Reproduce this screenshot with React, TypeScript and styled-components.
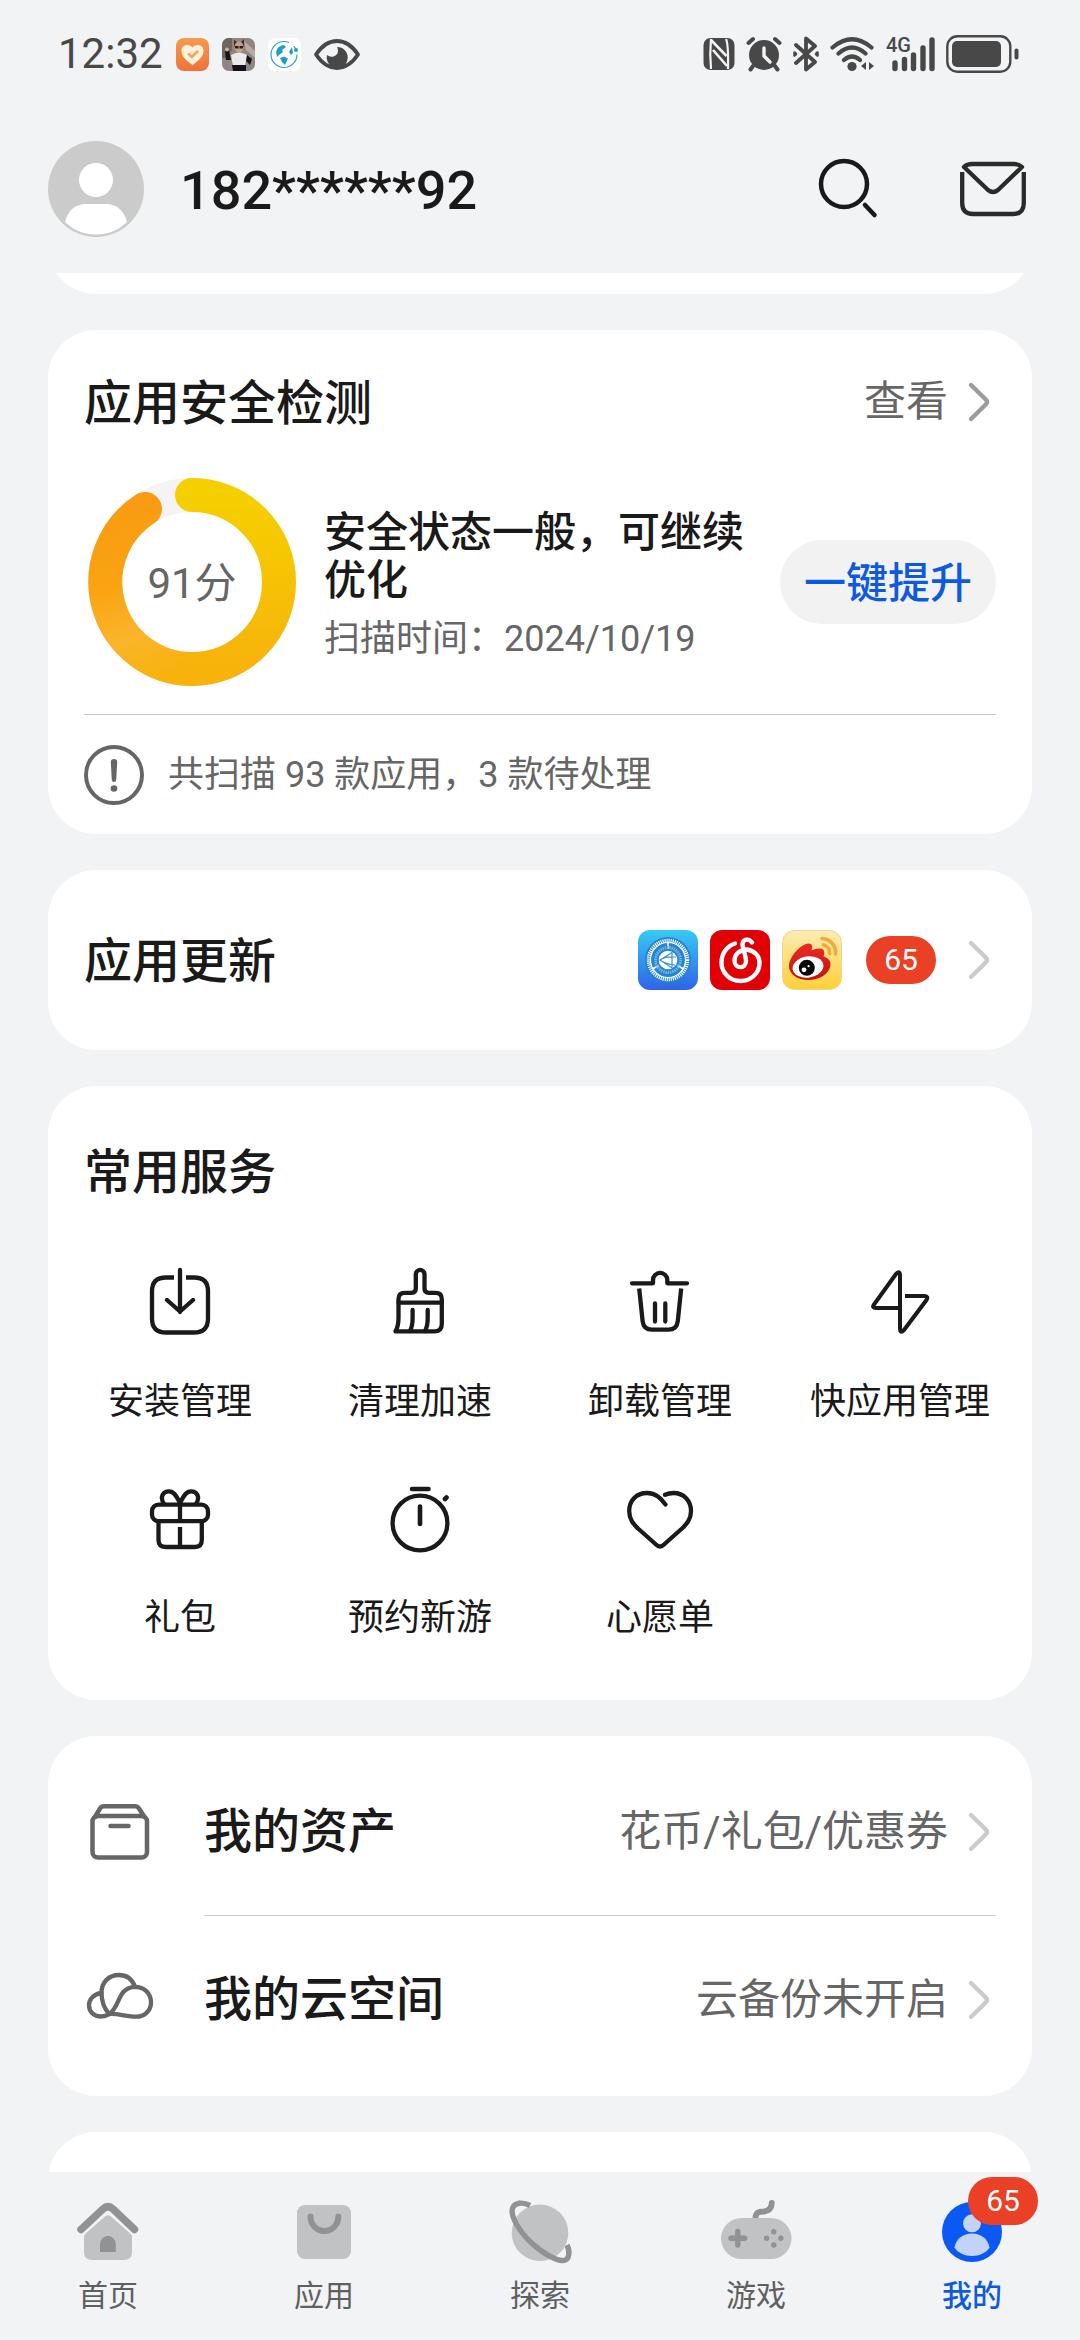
import React from "react";
import styled, { createGlobalStyle, css } from "styled-components";

const ink = "#1a1a1a";
const muted = "#666666";
const accent = "#0d5ae0";
const page = "#f1f3f5";

const GlobalStyle = createGlobalStyle`
  *, *::before, *::after { box-sizing: border-box; }
  body {
    margin: 0;
    background: ${page};
    color: ${ink};
    font-family: Roboto, "Noto Sans CJK SC", sans-serif;
    font-size: 36px;
    line-height: 48px;
  }
  button {
    margin: 0;
    padding: 0;
    border: 0;
    background: none;
    color: inherit;
    font: inherit;
    cursor: pointer;
  }
  a { color: inherit; text-decoration: none; }
  h1, h2, p, ul { margin: 0; padding: 0; font: inherit; }
  ul { list-style: none; }
  svg { display: block; flex: none; }
`;

/* ---------- layout ---------- */

const Screen = styled.div`
  display: flex;
  flex-direction: column;
  height: 100vh;
`;

const StatusBar = styled.div`
  display: flex;
  align-items: center;
  justify-content: space-between;
  height: 108px;
  flex: none;
  padding: 0 60px 0 58px;
  color: #484848;
`;

const StatusGroup = styled.div<{ $gap: number }>`
  display: flex;
  align-items: center;
  gap: ${(p) => p.$gap}px;
`;

const Clock = styled.time`
  font-size: 42px;
`;

const AccountBar = styled.header`
  display: flex;
  align-items: center;
  gap: 36px;
  flex: none;
  height: 165px;
  padding: 0 48px 3px;
`;

const Phone = styled.h1`
  flex: 1;
  padding-top: 3px;
  font-size: 54px;
  font-weight: 500;
  line-height: 72px;
`;

const Actions = styled.div`
  display: flex;
  gap: 72px;
`;

const Feed = styled.main`
  display: flex;
  flex: 1;
  flex-direction: column;
  gap: 36px;
  min-height: 0;
  padding: 0 48px;
  overflow: hidden auto;
  scrollbar-width: none;
`;

const Card = styled.section<{ $pad: string }>`
  flex: none;
  padding: ${(p) => p.$pad};
  border-radius: 48px;
  background: #fff;
`;

const ScrolledCard = styled(Card)`
  height: 96px;
  margin-top: -75px;
`;

const PeekCard = styled(Card)`
  height: 168px;
`;

const Row = styled.div<{ $height: number }>`
  display: flex;
  align-items: center;
  justify-content: space-between;
  height: ${(p) => p.$height}px;
`;

const Title = styled.h2`
  padding-top: 3px;
  font-size: 48px;
  font-weight: 500;
  line-height: 72px;
`;

const detailText = css`
  color: ${muted};
  font-size: 42px;
  line-height: 48px;
`;

const DetailLink = styled.a`
  display: flex;
  align-items: center;
  gap: 12px;
  ${detailText}
`;

/* ---------- security card ---------- */

const ScanBody = styled.div`
  display: flex;
  align-items: center;
  gap: 24px;
  margin-bottom: 24px;
`;

const Gauge = styled.div`
  display: grid;
  flex: none;
  place-items: center;
  > * { grid-area: 1 / 1; }
`;

const Score = styled.span`
  padding-top: 3px;
  ${detailText}
`;

const ScanText = styled.div`
  flex: 1;
  padding-top: 8px;
`;

const ScanState = styled.p`
  font-size: 42px;
  font-weight: 500;
  line-height: 48px;
`;

const Note = styled.p`
  color: ${muted};
`;

const ScanDate = styled(Note)`
  margin-top: 10px;
`;

const BoostButton = styled.button`
  flex: none;
  height: 84px;
  padding: 3px 24px 0;
  border-radius: 42px;
  background: #f2f2f2;
  color: ${accent};
  font-size: 42px;
  font-weight: 500;
`;

const ScanFooter = styled.div`
  display: flex;
  align-items: center;
  gap: 24px;
  height: 120px;
  border-top: 1px solid #cccccc;
`;

/* ---------- updates card ---------- */

const UpdateLink = styled.a`
  display: flex;
  align-items: center;
  gap: 24px;
`;

const AppIcons = styled.span`
  display: flex;
  gap: 12px;
`;

const Badge = styled.span`
  display: flex;
  align-items: center;
  justify-content: center;
  width: 70px;
  height: 48px;
  border-radius: 24px;
  background: #e94026;
  color: #fff;
  font-size: 30px;
`;

/* ---------- services card ---------- */

const ServiceTitle = styled(Title)`
  padding: 3px 24px 0;
`;

const ServiceGrid = styled.ul`
  display: grid;
  grid-template-columns: repeat(4, 1fr);
  row-gap: 56px;
  margin-top: 57px;
`;

const Service = styled.button`
  display: flex;
  flex-direction: column;
  align-items: center;
  gap: 40px;
  width: 100%;
`;

/* ---------- links card ---------- */

const MenuLink = styled.a`
  display: flex;
  align-items: center;
  gap: 48px;
`;

const MenuLine = styled.span<{ $ruled: boolean }>`
  display: flex;
  flex: 1;
  align-items: center;
  gap: 12px;
  height: 168px;
  border-bottom: 1px solid ${(p) => (p.$ruled ? "#cccccc" : "transparent")};
`;

const MenuName = styled.span`
  flex: 1;
  font-size: 48px;
  font-weight: 500;
`;

const MenuDetail = styled.span`
  ${detailText}
`;

/* ---------- bottom tabs ---------- */

const TabBar = styled.nav`
  display: grid;
  grid-template-columns: repeat(5, 1fr);
  flex: none;
  height: 168px;
  background: ${page};
`;

const Tab = styled.a<{ $active: boolean }>`
  display: flex;
  flex-direction: column;
  align-items: center;
  gap: 10px;
  padding-top: 24px;
  color: ${(p) => (p.$active ? accent : "#5e5f60")};
  font-size: 30px;
  font-weight: ${(p) => (p.$active ? 500 : 400)};
  line-height: 36px;
`;

const TabIcon = styled.span`
  position: relative;
`;

const TabBadge = styled(Badge)`
  position: absolute;
  top: -19px;
  left: 32px;
  font-weight: 400;
`;

/* ---------- drawings ---------- */

const Line72 = ({ children, color = ink, width = 4.3 }: { children: React.ReactNode; color?: string; width?: number }) => (
  <svg
    width="72"
    height="72"
    viewBox="0 0 72 72"
    fill="none"
    stroke={color}
    strokeWidth={width}
    strokeLinecap="round"
    strokeLinejoin="round"
    aria-hidden="true"
  >
    {children}
  </svg>
);

const Chevron = ({ color = "#cccccc" }: { color?: string }) => (
  <svg width="36" height="48" viewBox="0 0 36 48" fill="none" stroke={color} strokeWidth="4.4" strokeLinecap="round" strokeLinejoin="round" aria-hidden="true">
    <path d="M11 7L26 21.8Q28 24 26 26.2L11 41" />
  </svg>
);

const Avatar = () => (
  <svg width="96" height="96" viewBox="0 0 96 96" role="img" aria-label="头像">
    <circle cx="48" cy="48" r="48" fill="#cbcbcb" />
    <circle cx="48" cy="39" r="17" fill="#fff" />
    <path d="M17 81C20 69 28 63 38 63H58C68 63 76 69 79 81C71 89 60 93.5 48 93.5S25 89 17 81Z" fill="#fff" />
  </svg>
);

const SearchIcon = () => (
  <Line72 width={4.5}>
    <circle cx="28" cy="31" r="23" />
    <path d="M49 52L58.5 62" />
  </Line72>
);

const MailIcon = () => (
  <Line72 color="#2a2b2b" width={4.3}>
    <path d="M4 14Q7 11 12 11H54Q59 11 62 14L38 37Q33 41 28 37Z" />
    <path d="M2.2 19V50Q2.2 61 13 61H53Q63.8 61 63.8 50V19" strokeLinecap="butt" />
  </Line72>
);

const HeartAppIcon = () => (
  <svg width="33" height="33" viewBox="0 0 33 33" aria-hidden="true">
    <defs>
      <linearGradient id="heartBg" x1="0" y1="0" x2="0" y2="1">
        <stop offset="0" stopColor="#f59a50" />
        <stop offset="1" stopColor="#ee7339" />
      </linearGradient>
    </defs>
    <rect width="33" height="33" rx="8" fill="url(#heartBg)" />
    <path d="M16.5 27C10 22.500 5.500 18 5.500 13C5.500 9 8.300 7 11 7C13.500 7 15.500 8 16.500 9.500C17.500 8 19.500 7 22 7C24.700 7 27.500 9 27.500 13C27.500 18 23 22.500 16.500 27Z" fill="#fff0da" />
    <path d="M12 15.500L15.800 19L22 13" fill="none" stroke="#f2a367" strokeWidth="2.600" />
  </svg>
);

const PhotoIcon = () => (
  <svg width="33" height="33" viewBox="0 0 33 33" aria-hidden="true">
    <defs>
      <clipPath id="photoClip"><rect width="33" height="33" rx="7" /></clipPath>
    </defs>
    <g clipPath="url(#photoClip)">
      <rect width="33" height="33" fill="#8f8680" />
      <path d="M0 0H10V12L4 20H0Z" fill="#6d6561" />
      <path d="M22 3L33 13V20L24 12Z" fill="#b5aca6" />
      <path d="M12 2L15 4H19L22 1L22 8H12Z" fill="#3b2b28" />
      <ellipse cx="17" cy="9" rx="4.500" ry="5.500" fill="#c99d8b" />
      <path d="M12.500 8H16.500V10.500H13.500ZM17.500 8H21.500L20.500 10.500H17.500Z" fill="#201a1a" />
      <path d="M9 17Q17 12 25 17L23 28H11Z" fill="#ece9ec" />
      <path d="M3 13L7 12L9 22H4ZM25 17L30 21L28 27L24 23Z" fill="#171519" />
      <circle cx="5" cy="11.500" r="2" fill="#d6ab99" />
      <path d="M10 27H24V33H11Z" fill="#121014" />
    </g>
  </svg>
);

const GlobeIcon = () => (
  <svg width="33" height="33" viewBox="0 0 33 33" aria-hidden="true">
    <rect width="33" height="33" rx="7" fill="#fff" />
    <circle cx="16" cy="16.500" r="13" fill="none" stroke="#2fa3c4" strokeWidth="1.200" strokeDasharray="66 6 6 4" />
    <path d="M8 14Q9 8 16 7L18 9L14 12L15 14L11 17L9 19Z" fill="#1f9fc6" />
    <path d="M12 20L16 18.500L20 20.500L17 27L14 24Z" fill="#1f9fc6" />
    <path d="M21 14L24 9L25 15L23 17Z" fill="#1f9fc6" />
    <circle cx="28" cy="12" r="2" fill="#1f9fc6" />
  </svg>
);

const EyeIcon = () => (
  <svg width="46" height="33" viewBox="0 0 46 33" aria-hidden="true">
    <path d="M2 16.500Q11 3 23 3T44 16.500Q35 30 23 30T2 16.500Z" fill="none" stroke="#484848" strokeWidth="3.800" strokeLinejoin="round" />
    <path d="M23 9A10.500 10.500 0 1 1 13 17Q16 19.500 19.500 18.500Q24 17 24 12.500Q24 10.500 23 9Z" fill="#484848" />
  </svg>
);

const NfcIcon = () => (
  <svg width="32" height="36" viewBox="0 0 32 36" aria-hidden="true">
    <rect x="0.500" y="2" width="31" height="32" rx="7" fill="#484848" />
    <g fill="none" stroke={page} strokeWidth="2.200">
      <path d="M8 3Q6.500 18 8 33" />
      <path d="M23 3Q25.500 8 25 33" />
      <path d="M8 4L23.500 20M10 14L24 30" strokeWidth="2.600" />
    </g>
  </svg>
);

const AlarmIcon = () => (
  <svg width="36" height="36" viewBox="0 0 36 36" fill="none" stroke="#484848" strokeWidth="4" strokeLinecap="round" aria-hidden="true">
    <circle cx="18" cy="19" r="15" fill="#484848" stroke="none" />
    <path d="M2.500 7L7 3M33.500 7L29 3M7 30L4.500 33.500M29 30L31.500 33.500" />
    <path d="M18 12V20L24 26" stroke={page} strokeWidth="3.400" />
  </svg>
);

const BluetoothIcon = () => (
  <svg width="26" height="36" viewBox="0 0 26 36" fill="none" stroke="#484848" strokeWidth="3.800" strokeLinejoin="round" strokeLinecap="round" aria-hidden="true">
    <path d="M3 9L22 26L13 33.500V2.500L22 10L3 27" />
    <path d="M1.500 16.500L3 18L1.500 19.500ZM24.500 16.500L23 18L24.500 19.500Z" strokeWidth="2.500" />
  </svg>
);

const WifiIcon = () => (
  <svg width="44" height="36" viewBox="0 0 44 36" fill="none" stroke="#484848" strokeWidth="4.200" strokeLinecap="round" aria-hidden="true">
    <path d="M2.500 11.500Q22 -5 41.500 11.500M8.500 17.500Q22 5.500 35.500 17.500M14 24Q22 17 30 24" />
    <circle cx="22" cy="30.500" r="4.600" fill="#484848" stroke="none" />
    <path d="M36 26V34L31 30ZM39 26V34L44 30Z" fill="#484848" stroke="none" />
  </svg>
);

const SignalIcon = () => (
  <svg width="50" height="44" viewBox="0 -4 50 44" aria-hidden="true">
    <text x="1" y="16" fill="#484848" fontSize="20" fontWeight="500" fontFamily="Roboto, sans-serif">4G</text>
    <path d="M10 27V32.500M19.500 23.500V32.500M28.500 19V32.500M38 12V32.500M47 4V32.500" stroke="#484848" strokeWidth="5.400" strokeLinecap="round" />
  </svg>
);

const BatteryIcon = () => (
  <svg width="74" height="38" viewBox="0 0 74 38" aria-hidden="true">
    <rect x="1.300" y="1.300" width="63" height="35.400" rx="10" fill="none" stroke="#484848" strokeWidth="2.400" />
    <rect x="6" y="6" width="49" height="26" rx="5" fill="#484848" />
    <rect x="68.500" y="13.500" width="4" height="11" rx="2" fill="#484848" />
  </svg>
);

/* A ring of radius 87 that starts at twelve o'clock and stops just short of a full turn. */
const ScoreRing = () => (
  <svg width="216" height="216" viewBox="0 0 216 216" fill="none" strokeWidth="34" strokeLinecap="round" aria-hidden="true">
    <defs>
      <linearGradient id="ringRight" x1="0" y1="0" x2="0" y2="1">
        <stop offset="0" stopColor="#f6cf00" />
        <stop offset="0.500" stopColor="#f6c205" />
        <stop offset="1" stopColor="#f8b20c" />
      </linearGradient>
      <linearGradient id="ringLeft" gradientUnits="userSpaceOnUse" x1="108" y1="195" x2="60" y2="20">
        <stop offset="0" stopColor="#f8b20c" />
        <stop offset="0.250" stopColor="#fab52b" />
        <stop offset="0.550" stopColor="#f9a412" />
        <stop offset="1" stopColor="#fa9a12" />
      </linearGradient>
    </defs>
    <circle cx="108" cy="108" r="87" stroke="#f4f4f4" />
    <path d="M108 195A87 87 0 0 1 61 35" stroke="url(#ringLeft)" />
    <path d="M108 21A87 87 0 0 1 108 195" stroke="url(#ringRight)" />
  </svg>
);

const AlertIcon = () => (
  <svg width="60" height="60" viewBox="0 0 60 60" aria-hidden="true">
    <circle cx="30" cy="30" r="28" fill="none" stroke={muted} strokeWidth="4" />
    <path d="M26.800 17Q26.800 14 30 14T33.200 17L32.200 35Q32 37 30 37T27.800 35Z" fill={muted} />
    <circle cx="30" cy="43.500" r="3.300" fill={muted} />
  </svg>
);

const DialAppIcon = () => (
  <svg width="60" height="60" viewBox="0 0 60 60" aria-hidden="true">
    <defs>
      <linearGradient id="dialBg" x1="0" y1="0" x2="0" y2="1">
        <stop offset="0" stopColor="#36cbf3" />
        <stop offset="1" stopColor="#2f63e6" />
      </linearGradient>
    </defs>
    <rect width="60" height="60" rx="12" fill="url(#dialBg)" />
    <circle cx="30" cy="30" r="23" fill="#2783cf" />
    <g fill="none" stroke="#fff">
      <circle cx="30" cy="30" r="19.500" strokeWidth="3.500" strokeDasharray="1.100 0.942" />
      <circle cx="30" cy="30" r="17.500" strokeWidth="1.200" />
      <path d="M30 12V19M14.500 39L20.500 35.500M45.500 39L39.500 35.500" strokeWidth="1.600" />
    </g>
    <circle cx="30" cy="30" r="12.500" fill="none" stroke="#6bb7ea" strokeWidth="3" strokeDasharray="1.500 0.800" />
    <circle cx="30" cy="30" r="9.300" fill="#fff" />
    <path d="M22 30L34 22.500V38ZM22 30Q27 26 38 27M22 30Q27 34 37 35" fill="none" stroke="#3b8fdc" strokeWidth="1.200" />
  </svg>
);

const MusicAppIcon = () => (
  <svg width="60" height="60" viewBox="0 0 60 60" aria-hidden="true">
    <rect width="60" height="60" rx="12" fill="#e00006" />
    <path
      d="M42 12.500C39 8 33 9 32.500 14C32.500 18 36 26 36 31C36 39 24.500 39.500 24.500 30.500C24.500 24 30 19.500 37 19.500C45 21 49.500 26 49.500 33C49.500 43 41 51 30.500 51C19.500 51 11.500 42.500 11.500 32.500C11.500 23.500 17 16 25 13.500"
      fill="none"
      stroke="#fff"
      strokeWidth="4.400"
      strokeLinecap="round"
      strokeLinejoin="round"
    />
  </svg>
);

const WeiboAppIcon = () => (
  <svg width="60" height="60" viewBox="0 0 60 60" aria-hidden="true">
    <defs>
      <linearGradient id="weiboBg" x1="0" y1="0" x2="0" y2="1">
        <stop offset="0" stopColor="#fcebb4" />
        <stop offset="1" stopColor="#ffd037" />
      </linearGradient>
      <linearGradient id="weiboBody" x1="0" y1="0" x2="0" y2="1">
        <stop offset="0" stopColor="#ef2a23" />
        <stop offset="1" stopColor="#c4100f" />
      </linearGradient>
    </defs>
    <rect x="0.500" y="0.500" width="59" height="59" rx="12" fill="url(#weiboBg)" stroke="#e6cf8c" strokeWidth="0.800" />
    <path d="M7 36C7 28 17 15 26 13.500C30 13 31 16 29.500 20.500C34 18.500 39 17.500 41.500 20C43 22 42 25 41.500 26.500C46 28 49 30.500 48.500 35C47.500 44 37 50 26.500 50C15 50 7 44 7 36Z" fill="url(#weiboBody)" />
    <ellipse cx="26" cy="37" rx="15.500" ry="10.500" transform="rotate(-8 26 37)" fill="#fff" />
    <circle cx="24.800" cy="37.800" r="8" fill="#0a0a0a" />
    <circle cx="22" cy="39.800" r="2.400" fill="#fff" />
    <circle cx="26.600" cy="36.200" r="1.100" fill="#fff" />
    <path d="M40 8.500A14 14 0 0 1 53.500 24M41.500 15A8 8 0 0 1 47.500 23.500" fill="none" stroke="#f1a83c" strokeWidth="3.600" strokeLinecap="round" />
  </svg>
);

const InstallIcon = () => (
  <Line72>
    <path d="M30 11.500H22Q8 11.500 8 25.500V52.500Q8 66.500 22 66.500H50Q64 66.500 64 52.500V25.500Q64 11.500 50 11.500H42" strokeLinecap="butt" />
    <path d="M36 4V46M23 34L36 45.500L49 34" />
  </Line72>
);

const BroomIcon = () => (
  <Line72>
    <path d="M14.500 36.700V33Q14.500 26.800 20.700 26.800H27.500Q31.800 26.800 31.800 22.500V7.700A4.400 4.400 0 0 1 40.500 7.700V22.500Q40.500 26.800 44.800 26.800H51.600Q57.800 26.800 57.800 33V58Q57.800 65.400 50.400 65.400H11.500Q14.500 60 14.500 52Z" />
    <path d="M14.500 36.700H57.800M28.600 44V52Q28.600 60 26 65M43.700 44V52Q43.700 60 41 65" />
  </Line72>
);

const TrashIcon = () => (
  <Line72>
    <path d="M8 17.300H29V14A7.100 7.100 0 0 1 43.300 14V17.300H63" />
    <path d="M15.200 22.500L18.600 55Q19.500 63.700 28 63.700H44.400Q52.900 63.700 53.800 55L57.200 22.500" strokeLinecap="butt" />
    <path d="M31 37.500V55.500M41.300 37.500V55.500" />
  </Line72>
);

const BoltIcon = () => (
  <Line72 width={4}>
    <path d="M36 42H12Q7.500 42 10 38.500L32 8Q36 4 36 9.500V62.500Q36 68 40 64L62.500 34Q65 30 60 30H41" strokeLinecap="butt" />
  </Line72>
);

const GiftIcon = () => (
  <Line72>
    <rect x="8" y="22.600" width="56" height="16.600" rx="6.500" />
    <path d="M14.500 39.500V58Q14.500 65 21.500 65H50.800Q57.800 65 57.800 58V39.500M36 22.600V39M36 45V65" strokeLinecap="butt" />
    <path d="M20 22C15.500 15 19 9.300 25 9.300C31 9.300 33 16 36 21C39 16 41 9.300 47 9.300C53 9.300 56.500 15 52 22" />
  </Line72>
);

const TimerIcon = () => (
  <Line72>
    <circle cx="36" cy="41" r="27.400" />
    <path d="M28 7H44.500M36 24.500V42M61 17L62.500 15.500" strokeWidth="4.600" />
  </Line72>
);

const HeartIcon = () => (
  <Line72>
    <path d="M41.500 22.500C37 16.500 32 11 23 11C12 11 5.200 19 5.200 29C5.200 38 10 42.500 14 46.500L32 62.500Q36 66.500 40 62.500L58 46.500C62 42.500 67 38 67 29C67 19 60 11 49.500 11Q45 11 41 12.800" />
  </Line72>
);

const BoxIcon = () => (
  <Line72 color={muted} width={4.5}>
    <rect x="8.500" y="20" width="54.500" height="41.500" rx="5.500" />
    <path d="M11 21L16 12.500Q17.500 10.300 20 10.300H51Q53.500 10.300 55 12.500L60.500 21M26.500 30H44.500" />
  </Line72>
);

const CloudIcon = () => (
  <Line72 color={muted} width={4.3}>
    <path d="M17.500 29C9 30 5 36 5 41C5 48 10 52.500 17 52.500C21 52.500 23 51.500 25 50" />
    <path d="M25 50C20 44 17.500 37 17.500 29C17.500 18 25 11 35 11C43 11 48.500 16 51 22.800" />
    <path d="M25 50C36 44 33 23.500 51 22.800C60 22.800 67 29 67 38.500C67 47 60 52.900 52 52.700C42 52.500 35 49.500 25 50Z" />
  </Line72>
);

const light = "#c0c2c3";
const dark = "#919293";

const TabSvg = ({ children }: { children: React.ReactNode }) => (
  <svg width="72" height="72" viewBox="0 0 72 72" fill="none" strokeLinecap="round" strokeLinejoin="round" aria-hidden="true">
    {children}
  </svg>
);

const HomeTabIcon = () => (
  <TabSvg>
    <path d="M12 41Q12 39 13.500 37.500L33 20.500Q36 18 39 20.500L58.500 37.500Q60 39 60 41V56Q60 64 52 64H20Q12 64 12 56Z" fill={light} />
    <path d="M9 33.500L31 13Q36 8.500 41 13L62.500 33.500" stroke={page} strokeWidth="12" />
    <path d="M9 33.500L31 13Q36 8.500 41 13L62.500 33.500" stroke={dark} strokeWidth="7.500" />
    <path d="M28 56V48A7.900 7.900 0 0 1 43.800 48V56Z" fill={dark} />
  </TabSvg>
);

const BagTabIcon = () => (
  <TabSvg>
    <rect x="9" y="9" width="54" height="54" rx="8" fill={light} />
    <path d="M22.500 20.500V21A13.900 13.900 0 0 0 50.300 21V20.500" stroke={dark} strokeWidth="6" />
  </TabSvg>
);

const PlanetTabIcon = () => (
  <TabSvg>
    <circle cx="36" cy="36.800" r="28.300" fill={light} />
    <path d="M26 9.500C19 5.800 10 6 8.300 13C6.800 20 14 34 27 46.500C40 58.500 53 65 59 64.500C66 64 66 55 63 49" stroke={dark} strokeWidth="5.400" strokeLinecap="butt" />
  </TabSvg>
);

const PadTabIcon = () => (
  <TabSvg>
    <path d="M35.500 22C35.500 16 40 15.500 44 15.500C49 15 51.500 12 51.800 7" stroke={dark} strokeWidth="5.800" />
    <rect x="1" y="22" width="70.500" height="41" rx="20.500" fill={light} />
    <path d="M11 42.300H24.700M17.800 35.500V49" stroke={dark} strokeWidth="5.400" />
    <g fill={dark}>
      <circle cx="53.800" cy="35.700" r="2.700" />
      <circle cx="46.600" cy="42.300" r="2.700" />
      <circle cx="60.800" cy="42.300" r="2.700" />
      <circle cx="53.800" cy="49" r="2.700" />
    </g>
  </TabSvg>
);

const MeTabIcon = () => (
  <TabSvg>
    <circle cx="36" cy="36" r="30" fill="#0a59f5" />
    <circle cx="36" cy="27.300" r="9" fill="#c3d3f8" />
    <path d="M18.500 51.500C20 43 27 37.500 36 37.500S52 43 53.500 51.500C50 57 43.500 60 36 60S22 57 18.500 51.500Z" fill="#c3d3f8" />
  </TabSvg>
);

/* ---------- data ---------- */

const services = [
  { name: "安装管理", Icon: InstallIcon },
  { name: "清理加速", Icon: BroomIcon },
  { name: "卸载管理", Icon: TrashIcon },
  { name: "快应用管理", Icon: BoltIcon },
  { name: "礼包", Icon: GiftIcon },
  { name: "预约新游", Icon: TimerIcon },
  { name: "心愿单", Icon: HeartIcon },
];

const menu = [
  { name: "我的资产", detail: "花币/礼包/优惠券", Icon: BoxIcon },
  { name: "我的云空间", detail: "云备份未开启", Icon: CloudIcon },
];

const tabs = [
  { name: "首页", Icon: HomeTabIcon },
  { name: "应用", Icon: BagTabIcon },
  { name: "探索", Icon: PlanetTabIcon },
  { name: "游戏", Icon: PadTabIcon },
  { name: "我的", Icon: MeTabIcon, active: true, badge: 65 },
];

export default function App() {
  return (
    <Screen lang="zh-CN">
      <GlobalStyle />
      <StatusBar>
        <StatusGroup $gap={13}>
          <Clock>12:32</Clock>
          <HeartAppIcon />
          <PhotoIcon />
          <GlobeIcon />
          <EyeIcon />
        </StatusGroup>
        <StatusGroup $gap={11}>
          <NfcIcon />
          <AlarmIcon />
          <BluetoothIcon />
          <WifiIcon />
          <SignalIcon />
          <BatteryIcon />
        </StatusGroup>
      </StatusBar>

      <AccountBar>
        <Avatar />
        <Phone>182******92</Phone>
        <Actions>
          <button type="button" aria-label="搜索"><SearchIcon /></button>
          <button type="button" aria-label="消息"><MailIcon /></button>
        </Actions>
      </AccountBar>

      <Feed>
        <ScrolledCard $pad="0" />

        <Card $pad="0 36px">
          <Row $height={144}>
            <Title>应用安全检测</Title>
            <DetailLink href="#security">
              查看
              <Chevron color="#9c9c9c" />
            </DetailLink>
          </Row>
          <ScanBody>
            <Gauge>
              <ScoreRing />
              <Score>91分</Score>
            </Gauge>
            <ScanText>
              <ScanState>安全状态一般，可继续优化</ScanState>
              <ScanDate>扫描时间：2024/10/19</ScanDate>
            </ScanText>
            <BoostButton type="button">一键提升</BoostButton>
          </ScanBody>
          <ScanFooter>
            <AlertIcon />
            <Note>共扫描 93 款应用，3 款待处理</Note>
          </ScanFooter>
        </Card>

        <Card $pad="0 36px">
          <Row $height={180}>
            <Title>应用更新</Title>
            <UpdateLink href="#updates" aria-label="65 个应用更新">
              <AppIcons>
                <DialAppIcon />
                <MusicAppIcon />
                <WeiboAppIcon />
              </AppIcons>
              <Badge>65</Badge>
              <Chevron />
            </UpdateLink>
          </Row>
        </Card>

        <Card $pad="48px 12px 58px">
          <ServiceTitle>常用服务</ServiceTitle>
          <ServiceGrid>
            {services.map(({ name, Icon }) => (
              <li key={name}>
                <Service type="button">
                  <Icon />
                  {name}
                </Service>
              </li>
            ))}
          </ServiceGrid>
        </Card>

        <Card $pad="12px 36px">
          {menu.map(({ name, detail, Icon }, i) => (
            <MenuLink href="#menu" key={name}>
              <Icon />
              <MenuLine $ruled={i < menu.length - 1}>
                <MenuName>{name}</MenuName>
                <MenuDetail>{detail}</MenuDetail>
                <Chevron />
              </MenuLine>
            </MenuLink>
          ))}
        </Card>

        <PeekCard $pad="0" />
      </Feed>

      <TabBar>
        {tabs.map(({ name, Icon, active, badge }) => (
          <Tab href="#tab" key={name} $active={Boolean(active)} aria-current={active ? "page" : undefined}>
            <TabIcon>
              <Icon />
              {badge ? <TabBadge>{badge}</TabBadge> : null}
            </TabIcon>
            {name}
          </Tab>
        ))}
      </TabBar>
    </Screen>
  );
}
